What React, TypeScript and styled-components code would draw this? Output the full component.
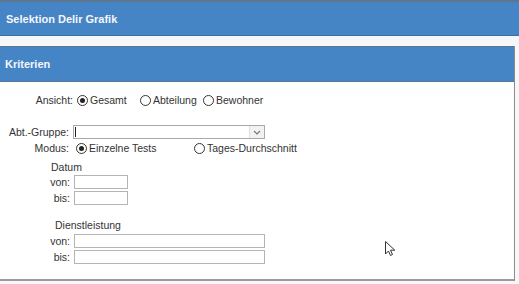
import styled, { createGlobalStyle } from "styled-components";

const GlobalStyle = createGlobalStyle`
  html, body {
    margin: 0;
    padding: 0;
    background: #f7f7f9;
    font-family: "Liberation Sans", Arial, sans-serif;
    font-size: 10.5px;
    color: #333;
  }
`;

const Page = styled.div`
  width: 519px;
  height: 284px;
  overflow: hidden;
  position: relative;
`;

const TitleBar = styled.div`
  height: 33px;
  background: #4685c5;
  border-top: 2px solid #5d7690;
  border-bottom: 1px solid #3f6d9c;
  color: #f4f6fa;
  font-weight: bold;
  font-size: 11px;
  line-height: 35px;
  padding-left: 6px;
`;

const Panel = styled.div`
  margin-top: 10px;
  width: 514px;
  height: 233px;
  background: #fff;
  border-right: 1px solid #8c8c8c;
  border-bottom: 2px solid #9a9a9a;
`;

const PanelHead = styled.div`
  height: 34px;
  background: #4685c5;
  border-top: 1px solid #5d7690;
  border-bottom: 1px solid #5d7690;
  color: #f4f6fa;
  font-weight: bold;
  font-size: 11px;
  line-height: 34px;
  padding-left: 5px;
`;

const Body = styled.div`
  display: flex;
  flex-direction: column;
  padding-top: 10px;
`;

const Row = styled.div<{ $label: number; $top?: number; $h?: number }>`
  display: grid;
  grid-template-columns: ${(p) => p.$label}px auto;
  align-items: center;
  column-gap: 4px;
  margin-top: ${(p) => p.$top ?? 0}px;
  height: ${(p) => p.$h ?? 16}px;
`;

const Label = styled.span`
  text-align: right;
`;

const Options = styled.div`
  display: flex;
  align-items: center;
`;

const Option = styled.label<{ $w?: number }>`
  display: flex;
  align-items: center;
  gap: 2px;
  width: ${(p) => (p.$w ? `${p.$w}px` : "auto")};
`;

const Radio = styled.span<{ $on?: boolean }>`
  width: 9px;
  height: 9px;
  border: 1px solid #333;
  border-radius: 50%;
  box-sizing: content-box;
  display: inline-flex;
  align-items: center;
  justify-content: center;
  &::after {
    content: "";
    width: 5px;
    height: 5px;
    border-radius: 50%;
    background: ${(p) => (p.$on ? "#222" : "transparent")};
  }
`;

const Select = styled.div`
  width: 190px;
  height: 12px;
  border: 1px solid #a9a9a9;
  display: flex;
  justify-content: space-between;
  align-items: stretch;
  background: #fff;
`;

const Caret = styled.span`
  width: 1px;
  margin: 1px 0 1px 1px;
  background: #222;
`;

const DropBtn = styled.span`
  width: 14px;
  border-left: 1px solid #ddd;
  background: #f2f2f2;
  display: flex;
  align-items: center;
  justify-content: center;
`;

const Group = styled.div<{ $left: number; $top: number }>`
  margin-left: ${(p) => p.$left}px;
  margin-top: ${(p) => p.$top}px;
  line-height: 13px;
`;

const FieldRow = styled(Row)`
  margin-left: 50px;
`;

const Input = styled.div<{ $w: number }>`
  width: ${(p) => p.$w}px;
  height: 12px;
  border: 1px solid #b4b4b4;
  background: #fff;
`;

const Cursor = styled.svg`
  position: absolute;
  left: 385px;
  top: 241px;
`;

export default function App() {
  return (
    <Page>
      <GlobalStyle />
      <TitleBar>Selektion Delir Grafik</TitleBar>
      <Panel>
        <PanelHead>Kriterien</PanelHead>
        <Body>
          <Row $label={73}>
            <Label>Ansicht:</Label>
            <Options>
              <Option $w={63}>
                <Radio $on />
                Gesamt
              </Option>
              <Option $w={63}>
                <Radio />
                Abteilung
              </Option>
              <Option>
                <Radio />
                Bewohner
              </Option>
            </Options>
          </Row>
          <Row $label={69} $top={17} $h={14}>
            <Label>Abt.-Gruppe:</Label>
            <Select>
              <Caret />
              <DropBtn>
                <svg width="8" height="5" viewBox="0 0 8 5">
                  <path d="M1 1l3 3 3-3" fill="none" stroke="#777" strokeWidth="1.2" />
                </svg>
              </DropBtn>
            </Select>
          </Row>
          <Row $label={69} $top={1}>
            <Label>Modus:</Label>
            <Options style={{ marginLeft: 3 }}>
              <Option $w={118}>
                <Radio $on />
                Einzelne Tests
              </Option>
              <Option>
                <Radio />
                Tages-Durchschnitt
              </Option>
            </Options>
          </Row>
          <Group $left={51} $top={5}>Datum</Group>
          <FieldRow $label={20} $h={16}>
            <Label>von:</Label>
            <Input $w={52} />
          </FieldRow>
          <FieldRow $label={20} $h={16}>
            <Label>bis:</Label>
            <Input $w={52} />
          </FieldRow>
          <Group $left={55} $top={13}>Dienstleistung</Group>
          <FieldRow $label={20} $top={1} $h={16}>
            <Label>von:</Label>
            <Input $w={189} />
          </FieldRow>
          <FieldRow $label={20} $h={16}>
            <Label>bis:</Label>
            <Input $w={189} />
          </FieldRow>
        </Body>
      </Panel>
      <Cursor width="11" height="16" viewBox="0 0 11 16">
        <path d="M0.5 0.5v12.5l3-3 2 4.5 2-1-2-4.3h4.3z" fill="#fff" stroke="#333" strokeWidth="1" />
      </Cursor>
    </Page>
  );
}
